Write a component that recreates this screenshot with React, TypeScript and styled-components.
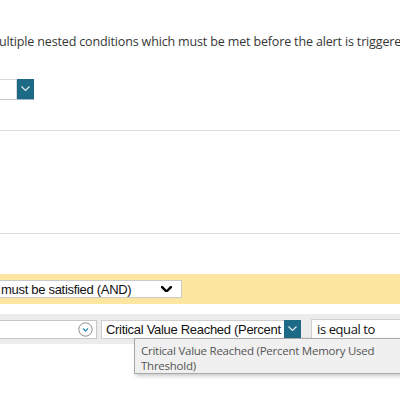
import React from "react";
import styled, { createGlobalStyle } from "styled-components";

const Global = createGlobalStyle`
  html, body { margin: 0; padding: 0; background: #fff; overflow: hidden; }
  body { width: 400px; height: 396px; }
`;

const Page = styled.div`
  position: relative;
  width: 400px;
  height: 396px;
  overflow: hidden;
  font-family: "Open Sans", "Liberation Sans", sans-serif;
`;

const Description = styled.p`
  margin: 0;
  padding-top: 33px;
  height: 18px;
  line-height: 18px;
  font-size: 12.5px;
  letter-spacing: -0.15px;
  color: #363636;
  white-space: nowrap;
  text-indent: -1px;
`;

const FieldRow = styled.div`
  display: flex;
  margin-top: 28px;
  height: 21px;
`;

const SelectBox = styled.div<{ $w: number }>`
  width: ${(p) => p.$w}px;
  height: 21px;
  box-sizing: border-box;
  border: 1px solid #d9d9d9;
  border-left: none;
  border-bottom-color: #c8c8c8;
  background: #fff;
`;

const BlueButton = styled.div<{ $h: number }>`
  width: 17px;
  height: ${(p) => p.$h}px;
  background: #1d6a86;
  display: flex;
  align-items: center;
  justify-content: center;
  flex: none;
  box-sizing: border-box;
  border-bottom: 1px solid #9fb4c0;
`;

const Divider = styled.div<{ $top: number }>`
  margin-top: ${(p) => p.$top}px;
  height: 1px;
  background: #dedede;
`;

const YellowBand = styled.div`
  margin-top: 40px;
  height: 30px;
  background: #fde6a0;
  display: flex;
  align-items: center;
`;

const NativeSelect = styled.div`
  margin-left: -60px;
  width: 242px;
  height: 18px;
  box-sizing: border-box;
  border: 1px solid #c9c9c9;
  background: #fff;
  display: flex;
  align-items: center;
  justify-content: space-between;
  padding: 0 9px 0 60px;
  font-family: "Liberation Sans", Arial, sans-serif;
  font-size: 13px;
  letter-spacing: -0.3px;
  color: #111;
`;

const GrayRow = styled.div`
  margin-top: 10px;
  height: 30px;
  background: #ececec;
  display: flex;
  align-items: center;
  gap: 4px;
`;

const FirstSelect = styled.div`
  margin-left: -40px;
  width: 137px;
  height: 19px;
  box-sizing: border-box;
  border: 1px solid #c7c7c7;
  background: #fff;
  display: flex;
  align-items: center;
  justify-content: flex-end;
  padding-right: 3px;
`;

const Combo = styled.div`
  display: flex;
  align-items: stretch;
  height: 19px;
`;

const ComboText = styled.div`
  width: 183px;
  box-sizing: border-box;
  border: 1px solid #cfcfcf;
  border-right: none;
  background: #fff;
  font-family: "Liberation Sans", Arial, sans-serif;
  font-size: 13px;
  letter-spacing: -0.3px;
  line-height: 17px;
  color: #111;
  padding-left: 4px;
  white-space: nowrap;
  overflow: hidden;
`;

const OperatorInput = styled.div`
  margin-left: 6px;
  flex: 1;
  height: 20px;
  box-sizing: border-box;
  border: 1px solid #cfcfcf;
  border-right: none;
  background: #fff;
  font-size: 13px;
  letter-spacing: -0.4px;
  line-height: 18px;
  color: #111;
  padding-left: 5px;
  white-space: nowrap;
`;

const Tooltip = styled.div`
  position: absolute;
  left: 134px;
  top: 338px;
  width: 280px;
  height: 36px;
  box-sizing: border-box;
  background: #f0f0f0;
  border: 1px solid #a9a9a9;
  box-shadow: 2px 2px 4px rgba(0, 0, 0, 0.22);
  padding: 4px 0 0 6px;
  font-size: 11.5px;
  letter-spacing: -0.25px;
  line-height: 15px;
  color: #555;
`;

const Chevron = ({ color, size = 10, sw = 1.4 }: { color: string; size?: number; sw?: number }) => (
  <svg width={size} height={size * 0.6} viewBox="0 0 10 6">
    <polyline points="1,1 5,5 9,1" fill="none" stroke={color} strokeWidth={sw} strokeLinecap="square" />
  </svg>
);

const CircleChevron = () => (
  <svg width="15" height="15" viewBox="0 0 15 15">
    <circle cx="7.5" cy="7.5" r="6.7" fill="#fff" stroke="#8c8c8c" strokeWidth="1" />
    <polyline points="5,6.5 7.5,9 10,6.5" fill="none" stroke="#2f8fc4" strokeWidth="1.3" />
  </svg>
);

export default function App() {
  return (
    <Page>
      <Global />
      <Description>ultiple nested conditions which must be met before the alert is triggered.</Description>
      <FieldRow>
        <SelectBox $w={17} />
        <BlueButton $h={21}>
          <Chevron color="#e8eef2" size={9} sw={1.3} />
        </BlueButton>
      </FieldRow>
      <Divider $top={30} />
      <Divider $top={102} />
      <YellowBand>
        <NativeSelect>
          <span>must be satisfied (AND)</span>
          <Chevron color="#000" size={11} sw={2.2} />
        </NativeSelect>
      </YellowBand>
      <GrayRow>
        <FirstSelect>
          <CircleChevron />
        </FirstSelect>
        <Combo>
          <ComboText>Critical Value Reached (Percent Memory Used Threshold)</ComboText>
          <BlueButton $h={19}>
            <Chevron color="#e8eef2" size={9} sw={1.3} />
          </BlueButton>
        </Combo>
        <OperatorInput>is equal to</OperatorInput>
      </GrayRow>
      <Tooltip>
        Critical Value Reached (Percent Memory Used
        <br />
        Threshold)
      </Tooltip>
    </Page>
  );
}
